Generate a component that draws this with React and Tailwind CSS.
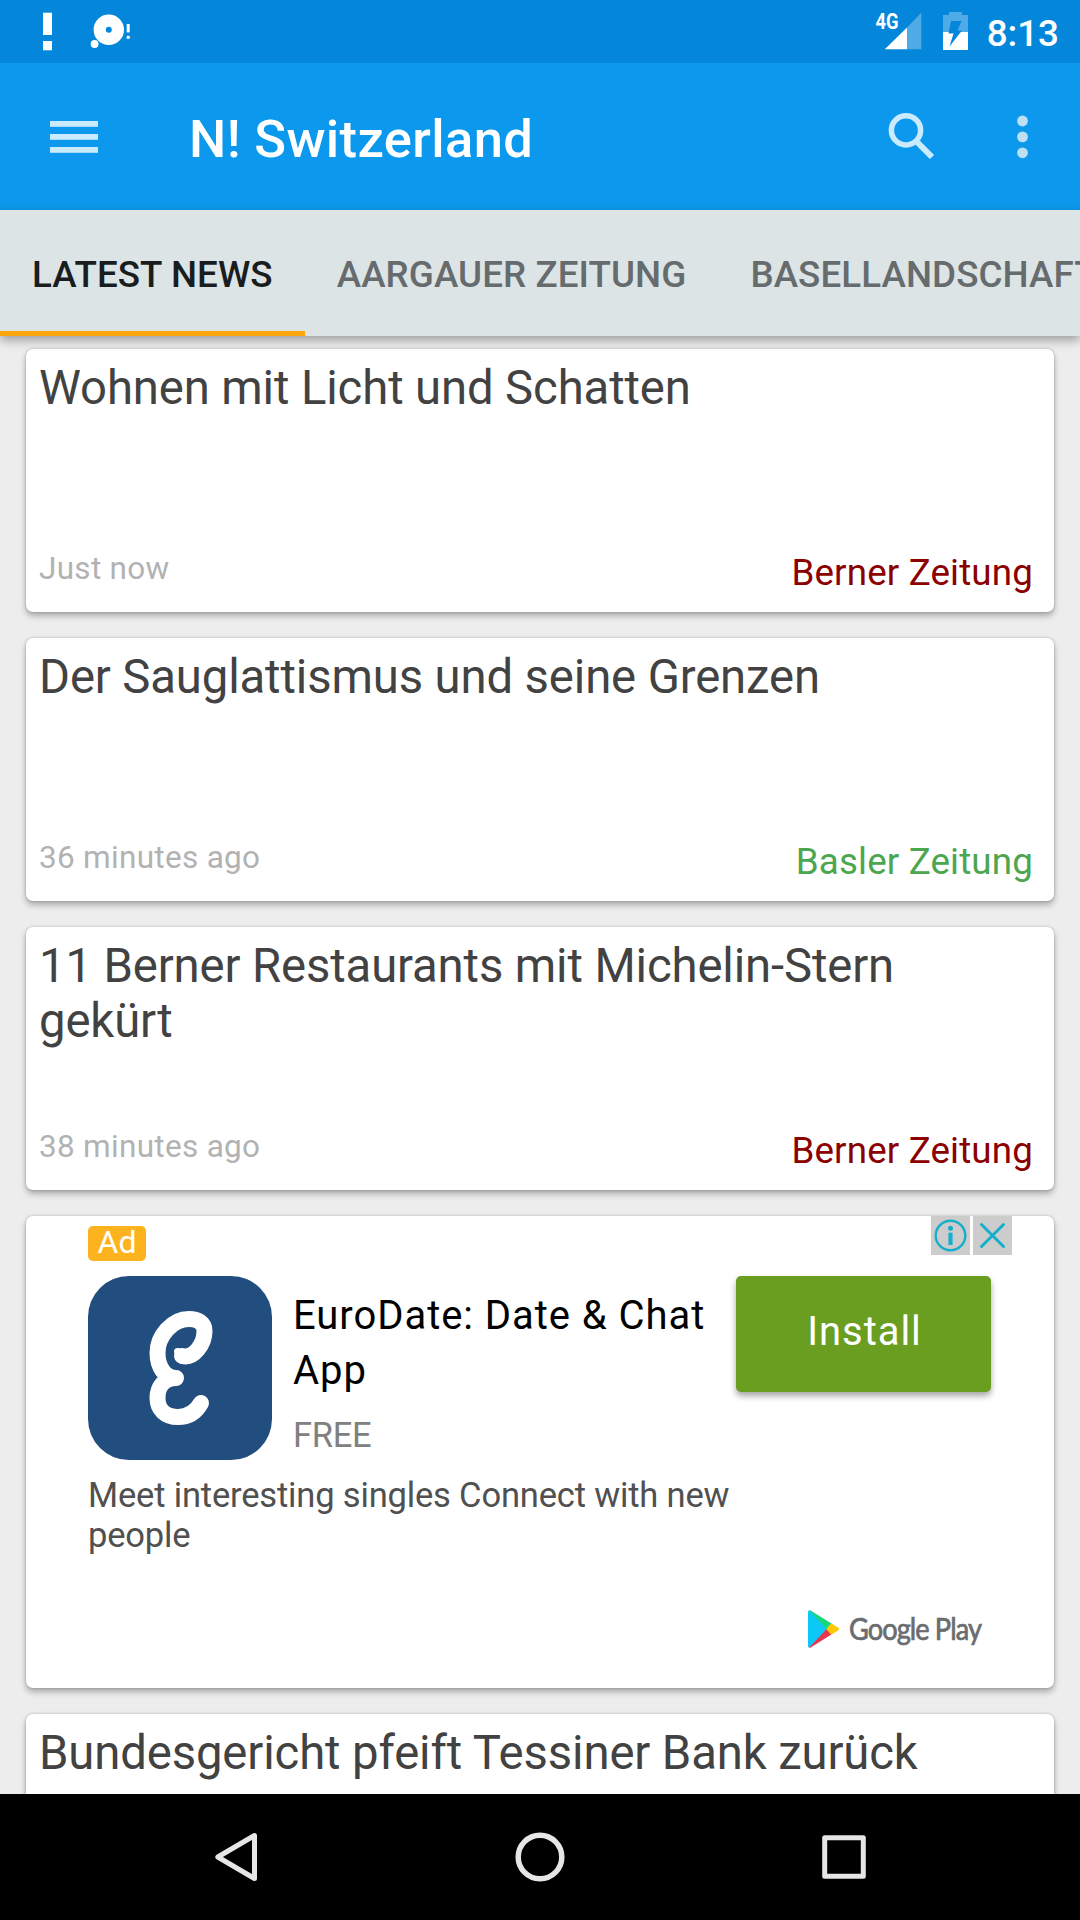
import React, { useState } from "react";

const tabs = ["Latest News", "Aargauer Zeitung", "Basellandschaft"];

const articles = [
  {
    id: 1,
    title: "Wohnen mit Licht und Schatten",
    time: "Just now",
    source: "Berner Zeitung",
    color: "text-[#8b0000]",
  },
  {
    id: 2,
    title: "Der Sauglattismus und seine Grenzen",
    time: "36 minutes ago",
    source: "Basler Zeitung",
    color: "text-[#4ca64f]",
  },
  {
    id: 3,
    title: "11 Berner Restaurants mit Michelin-Stern gekürt",
    time: "38 minutes ago",
    source: "Berner Zeitung",
    color: "text-[#8b0000]",
  },
];

const cardClass =
  "shrink-0 bg-white rounded-[7px] shadow-[0_4px_6px_rgba(0,0,0,0.28),0_0_3px_rgba(0,0,0,0.22)]";

/* ===== STATUS BAR ===== */
function StatusBar() {
  return (
    <div className="h-[63px] shrink-0 flex items-center justify-between bg-[#0487db] text-white">
      <svg width="160" height="63" fill="#fff">
        <rect x="43" y="12.7" width="9" height="22.3" />
        <rect x="43" y="41" width="9" height="9.3" />
        <circle cx="108.8" cy="29.7" r="9.1" fill="none" stroke="#fff" strokeWidth="12.2" />
        <circle cx="94.6" cy="44" r="3.9" />
        <rect x="126.7" y="24" width="3" height="8.4" />
        <rect x="126.7" y="35.8" width="3" height="3" />
      </svg>

      <div className="flex items-center pr-[21px]">
        <svg width="105" height="63" viewBox="870 0 105 63" fill="#fff">
          <text
            x="875.5"
            y="29"
            fontFamily="Roboto, sans-serif"
            fontWeight="700"
            fontSize="21.5"
            textLength="23"
            lengthAdjust="spacingAndGlyphs"
          >
            4G
          </text>
          <path d="M907 27.500L921.300 12.700V49.300H907z" opacity="0.3" />
          <path d="M907 27.500V49.300H884.800z" />
          <path d="M949 12H962V15H968V32H943V15H949z" opacity="0.3" />
          <path d="M943 32H968V50H943z" />
          <path d="M951 21H961.500L957.500 30.500H962L949.500 46.500L953.500 33.500H948.500z" fill="#0487db" />
        </svg>
        <span className="w-[84px] text-right text-[36.75px] font-medium leading-[63px] pt-[3px]">
          8:13
        </span>
      </div>
    </div>
  );
}

/* ===== TOOLBAR ===== */
function Toolbar() {
  return (
    <div className="h-[147px] shrink-0 flex items-center bg-[#0c99ed] text-white">
      <button className="ml-[50px]">
        <svg width="48" height="32" fill="#caeafd">
          <rect width="48" height="5.800" />
          <rect y="13" width="48" height="5.800" />
          <rect y="26" width="48" height="5.800" />
        </svg>
      </button>
      <h1 className="ml-[91px] mt-[4px] flex-1 text-[52.5px] font-medium leading-[62px] tracking-[0.38px]">
        N! Switzerland
      </h1>
      <button className="mb-[2px]">
        <svg width="48" height="48" fill="none" stroke="#caeafd" strokeWidth="5.500">
          <circle cx="18" cy="18.300" r="14.600" />
          <path d="M29.500 30.500L44 45" strokeWidth="6" />
        </svg>
      </button>
      <button className="ml-[80px] mr-[51px]">
        <svg width="13" height="44" fill="#bde0f5">
          <circle cx="6.500" cy="6" r="5.400" />
          <circle cx="6.500" cy="21.900" r="5.400" />
          <circle cx="6.500" cy="37.800" r="5.400" />
        </svg>
      </button>
    </div>
  );
}

function Tabs() {
  const [active, setActive] = useState(0);

  return (
    <div className="relative z-10 h-[126px] shrink-0 flex bg-[#dce4e6] shadow-[0_4px_10px_rgba(0,0,0,0.35)]">
      {tabs.map((tab, i) => (
        <button
          key={tab}
          onClick={() => setActive(i)}
          className={
            "shrink-0 px-[32px] pt-[8px] text-[36.75px] font-medium tracking-[0.08px] uppercase whitespace-nowrap border-b-[5px] " +
            (active === i
              ? "text-[#191d1e] border-[#ffa60a]"
              : "text-[#666b6d] border-transparent")
          }
        >
          {tab}
        </button>
      ))}
    </div>
  );
}

/* ===== ARTICLE CARD ===== */
function ArticleCard({ article }) {
  return (
    <div className={cardClass + " h-[263px] flex flex-col justify-between"}>
      <h2 className="pl-[13px] pr-[60px] pt-[12px] text-[47.25px] leading-[55px] tracking-[-0.12px] text-[#424242]">
        {article.title}
      </h2>
      {article.time && (
        <div className="flex items-end justify-between pl-[13px] pr-[21px]">
          <span className="pb-[25px] text-[31.5px] leading-[37px] tracking-[0.3px] text-[#b2b2b2]">
            {article.time}
          </span>
          <span
            className={
              "pb-[18px] text-[36.75px] leading-[43px] tracking-[0.15px] " + article.color
            }
          >
            {article.source}
          </span>
        </div>
      )}
    </div>
  );
}

function AdCard() {
  return (
    <div className={cardClass + " h-[472px] pl-[62px]"}>
      <div className="h-[39px] flex justify-between pr-[42px]">
        <span className="mt-[10px] w-[58px] h-[35px] rounded-[5px] bg-[#fdb31d] text-white text-center text-[32px] leading-[32px]">
          Ad
        </span>
        <div className="flex gap-[3px]">
          <svg width="39" height="39" fill="none" stroke="#16afcb" className="bg-[#cccccc]">
            <circle cx="19.500" cy="19.500" r="14.800" strokeWidth="2.400" />
            <circle cx="19.500" cy="12.300" r="2.500" fill="#16afcb" stroke="none" />
            <path d="M19.500 16.700V29" strokeWidth="4.200" />
          </svg>
          <svg width="39" height="39" fill="none" stroke="#16afcb" className="bg-[#cccccc]">
            <path d="M8.500 8.500L30.500 30.500M30.500 8.500L8.500 30.500" strokeWidth="3" strokeLinecap="round" />
          </svg>
        </div>
      </div>

      <div className="mt-[21px] flex items-start pr-[63px]">
        {/* app icon */}
        <svg width="184" height="184" className="shrink-0 rounded-[41px] bg-[#224d7f]">
          <path
            d="M94 80C106 83 116.500 68 116.500 55C116.500 46 109 43 101 43C84 43 69.500 60 69.500 77C69.500 91 77 102 88 102C76 102 69.500 111 69.500 122C69.500 133 77 141 90 141C101 141 108 136 113 127"
            fill="none"
            stroke="#fff"
            strokeWidth="16"
            strokeLinecap="round"
            strokeLinejoin="round"
          />
          <circle cx="89.500" cy="75.500" r="3.500" fill="#fff" />
        </svg>
        <div className="ml-[21px] mt-[12px] flex-1">
          <h3 className="text-[40px] leading-[55px] tracking-[0.95px] text-black">
            EuroDate: Date &amp; Chat App
          </h3>
          <p className="mt-[17px] text-[34.5px] leading-[40px] tracking-[-0.3px] text-[#808080]">
            FREE
          </p>
        </div>
        <button className="shrink-0 w-[255px] h-[116px] pb-[4px] pl-[2px] rounded-[5px] bg-[#6a9e20] text-white text-[40px] tracking-[0.95px] shadow-[0_4px_6px_rgba(0,0,0,0.35)]">
          Install
        </button>
      </div>

      <p className="mt-[15px] w-[700px] text-[34.5px] leading-[40px] tracking-[-0.17px] text-[#505050]">
        Meet interesting singles Connect with new people
      </p>

      {/* store badge */}
      <div className="mt-[55px] flex items-center justify-end pr-[73px]">
        <svg width="32" height="38">
          <path d="M0 2Q0 0 2 0.500L19.500 19L2 37.500Q0 38 0 36z" fill="#0cc8f6" />
          <path d="M1 0.300Q2 0 3 0.800L23.500 13.500L18.700 19z" fill="#17d67c" />
          <path d="M1 37.700Q2 38 3 37.200L23.500 24.500L18.700 19z" fill="#e8364f" />
          <path d="M23.300 13.300L30.500 17.800Q32 19 30.500 20.200L23.300 24.700L18.300 19z" fill="#ffc90a" />
        </svg>
        <svg width="132" height="38" className="ml-[9px] overflow-visible">
          <text
            y="29.500"
            fontFamily="Lato, sans-serif"
            fontSize="30"
            letterSpacing="-1"
            textLength="132"
            lengthAdjust="spacingAndGlyphs"
            fill="#6b6c6e"
            stroke="#6b6c6e"
            strokeWidth="0.700"
          >
            Google Play
          </text>
        </svg>
      </div>
    </div>
  );
}

function NavBar() {
  return (
    <div className="relative z-10 h-[126px] shrink-0 flex items-center justify-center bg-black">
      <svg width="1080" height="126" fill="none" stroke="#e6e6e6" strokeWidth="5.500" strokeLinejoin="round">
        <path d="M254.500 41.500V84.500L217.800 63z" strokeWidth="5" />
        <circle cx="540" cy="63" r="21.800" />
        <rect x="824.700" y="43.700" width="38.600" height="38.600" strokeWidth="5" />
      </svg>
    </div>
  );
}

export default function App() {
  return (
    <div className="w-[1080px] h-[1920px] flex flex-col overflow-hidden bg-[#ededed] font-[Roboto,sans-serif]">
      <StatusBar />
      <Toolbar />
      <Tabs />
      <main className="flex-1 min-h-0 overflow-hidden flex flex-col gap-[26px] px-[26px] pt-[13px]">
        {articles.map((article) => (
          <ArticleCard key={article.id} article={article} />
        ))}
        <AdCard />
        <ArticleCard article={{ title: "Bundesgericht pfeift Tessiner Bank zurück" }} />
      </main>
      <NavBar />
    </div>
  );
}
